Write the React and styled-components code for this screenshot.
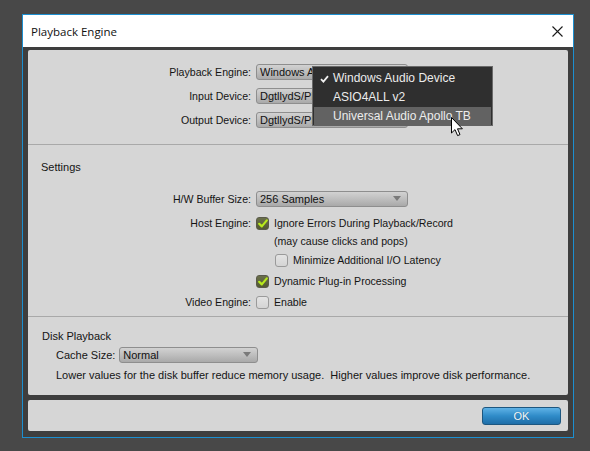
import React from "react";
import styled, { createGlobalStyle } from "styled-components";

const GlobalStyle = createGlobalStyle`
  html, body {
    margin: 0;
    padding: 0;
    background: #484848;
  }
  body {
    font-family: "Liberation Sans", Arial, sans-serif;
    font-size: 10.6px;
    color: #141414;
  }
`;

const engineRows = [
  { label: "Playback Engine:", value: "Windows A" },
  { label: "Input Device:", value: "DgtllydS/PD" },
  { label: "Output Device:", value: "DgtllydS/PD" },
];

const menuItems = [
  { text: "Windows Audio Device", checked: true },
  { text: "ASIO4ALL v2" },
  { text: "Universal Audio Apollo TB", active: true },
];

const Check = ({ checked }) => (
  <CheckBox checked={checked}>
    {checked && (
      <svg width="10" height="9" viewBox="0 0 10 9">
        <path
          d="M1.2 4.8 L3.8 7.4 L8.8 1.4"
          fill="none"
          stroke="#b8ea1c"
          strokeWidth="2.2"
          strokeLinecap="round"
          strokeLinejoin="round"
        />
      </svg>
    )}
  </CheckBox>
);

const App = () => {
  return (
    <>
      <GlobalStyle />
      <Window>
        <TitleBar>
          <Title>Playback Engine</Title>
          <CloseIcon width="11" height="11" viewBox="0 0 11 11">
            <path d="M0.5 0.5 L10.5 10.5 M10.5 0.5 L0.5 10.5" stroke="#1a1a1a" strokeWidth="1.1" />
          </CloseIcon>
        </TitleBar>
        <Body>
          <MainPanel>
            <Section h={94} pt={14}>
              <EngineGrid>
                {engineRows.map((row, i) => (
                  <React.Fragment key={i}>
                    <Label>{row.label}</Label>
                    <Select w={152}>{row.value}</Select>
                  </React.Fragment>
                ))}
              </EngineGrid>
              <Menu>
                {menuItems.map((item, i) => (
                  <MenuItem key={i} active={item.active}>
                    <MenuTick>
                      {item.checked && (
                        <svg width="9" height="8" viewBox="0 0 9 8">
                          <path
                            d="M1 4.2 L3.4 6.6 L8 1.2"
                            fill="none"
                            stroke="#f0f0f0"
                            strokeWidth="1.8"
                          />
                        </svg>
                      )}
                    </MenuTick>
                    {item.text}
                  </MenuItem>
                ))}
                <Cursor width="13" height="20" viewBox="0 0 13 20">
                  <path
                    d="M0.5 0.5 L0.5 16 L4 12.6 L6.6 18.6 L9 17.6 L6.5 11.8 L11.4 11.8 Z"
                    fill="#ffffff"
                    stroke="#000000"
                    strokeWidth="1"
                    strokeLinejoin="round"
                  />
                </Cursor>
              </Menu>
            </Section>
            <Divider />
            <Section h={171} pt={15} pl={13}>
              <Heading>Settings</Heading>
              <Row mt={17} ml={-13}>
                <Label>H/W Buffer Size:</Label>
                <Select w={152}>256 Samples</Select>
              </Row>
              <Row mt={8} ml={-13}>
                <Label>Host Engine:</Label>
                <Check checked />
                <Text>Ignore Errors During Playback/Record</Text>
              </Row>
              <Row mt={2} ml={-13}>
                <Label />
                <Text indent={18}>(may cause clicks and pops)</Text>
              </Row>
              <Row mt={3} ml={-13}>
                <Label />
                <Indent w={19} />
                <Check />
                <Text>Minimize Additional I/O Latency</Text>
              </Row>
              <Row mt={5} ml={-13}>
                <Label />
                <Check checked />
                <Text>Dynamic Plug-in Processing</Text>
              </Row>
              <Row mt={5} ml={-13}>
                <Label>Video Engine:</Label>
                <Check />
                <Text>Enable</Text>
              </Row>
            </Section>
            <Divider />
            <Section h={78} pt={12} pl={14}>
              <Heading>Disk Playback</Heading>
              <DiskRow>
                <span>Cache Size:</span>
                <Select w={139}>Normal</Select>
              </DiskRow>
              <Note>
                Lower values for the disk buffer reduce memory usage.&nbsp; Higher values improve disk
                performance.
              </Note>
            </Section>
          </MainPanel>
          <ButtonPanel>
            <OkButton>OK</OkButton>
          </ButtonPanel>
        </Body>
      </Window>
    </>
  );
};

const Window = styled.div`
  margin: 14px 0 0 22px;
  width: 550px;
  border: 1px solid #1c8fd0;
  display: flex;
  flex-direction: column;
`;
const TitleBar = styled.div`
  height: 32px;
  background: #ffffff;
  display: flex;
  align-items: center;
  justify-content: space-between;
  padding: 0 10px 0 8px;
`;
const Title = styled.div`
  font-family: "Open Sans", "Noto Sans", sans-serif;
  font-size: 11.5px;
  color: #111;
`;
const CloseIcon = styled.svg`
  display: block;
  margin-top: 1px;
`;
const Body = styled.div`
  background: #3e3e3e;
  padding: 3px 5px 6px 5px;
  display: flex;
  flex-direction: column;
  gap: 5px;
`;
const MainPanel = styled.div`
  background: #d6d6d6;
  border-radius: 2px;
  display: flex;
  flex-direction: column;
`;
const Section = styled.div`
  position: relative;
  height: ${(p) => p.h}px;
  padding-top: ${(p) => p.pt}px;
  padding-left: ${(p) => p.pl || 0}px;
  box-sizing: border-box;
`;
const Divider = styled.div`
  height: 1px;
  background: #a9a9a9;
`;
const EngineGrid = styled.div`
  display: grid;
  grid-template-columns: 228px auto;
  row-gap: 8px;
  grid-auto-rows: 16px;
  align-items: center;
  justify-items: start;
`;
const Label = styled.div`
  width: 223px;
  text-align: right;
  flex: none;
  margin-right: 5px;
  white-space: nowrap;
`;
const Select = styled.div`
  position: relative;
  box-sizing: border-box;
  width: ${(p) => p.w}px;
  height: 16px;
  line-height: 14px;
  padding-left: 3px;
  border: 1px solid #8e8e8e;
  border-radius: 3px;
  background: linear-gradient(#d2d2d2, #bcbcbc 55%, #a9a9a9);
  color: #111;
  font-size: 11px;
  white-space: nowrap;
  overflow: hidden;
  &::after {
    content: "";
    position: absolute;
    right: 6px;
    top: 4px;
    border-left: 4px solid transparent;
    border-right: 4px solid transparent;
    border-top: 5px solid #7a7a7a;
  }
`;
const Heading = styled.div`
  height: 14px;
  line-height: 14px;
  font-size: 11px;
`;
const Row = styled.div`
  display: flex;
  align-items: center;
  height: 16px;
  margin-top: ${(p) => p.mt}px;
  margin-left: ${(p) => p.ml || 0}px;
`;
const Indent = styled.div`
  width: ${(p) => p.w}px;
  flex: none;
`;
const Text = styled.span`
  margin-left: ${(p) => (p.indent ? p.indent : 5)}px;
  white-space: nowrap;
`;
const CheckBox = styled.div`
  box-sizing: border-box;
  width: 13px;
  height: 13px;
  flex: none;
  border-radius: 3px;
  display: flex;
  align-items: center;
  justify-content: center;
  border: 1px solid ${(p) => (p.checked ? "#5a5a4a" : "#9a9a9a")};
  background: ${(p) =>
    p.checked ? "linear-gradient(#6a6f4a, #545a33)" : "linear-gradient(#e4e4e4, #d4d4d4)"};
`;
const DiskRow = styled.div`
  display: flex;
  align-items: center;
  gap: 4px;
  height: 16px;
  margin: 4px 0 0 14px;
  font-size: 11px;
`;
const Note = styled.div`
  margin: 5px 0 0 14px;
  height: 14px;
  line-height: 14px;
  font-size: 11px;
  white-space: nowrap;
`;
const Menu = styled.div`
  position: absolute;
  left: 284px;
  top: 16px;
  width: 181px;
  height: 60px;
  box-sizing: border-box;
  background: #2f2f2f;
  border: 1px solid #6a6a6a;
  padding-top: 2px;
  font-size: 12px;
  color: #ececec;
`;
const MenuItem = styled.div`
  height: 19px;
  line-height: 19px;
  display: flex;
  align-items: center;
  margin: 0 1px;
  white-space: nowrap;
  background: ${(p) => (p.active ? "#626262" : "transparent")};
`;
const MenuTick = styled.span`
  width: 19px;
  flex: none;
  display: flex;
  justify-content: center;
  padding-left: 1px;
  box-sizing: border-box;
`;
const Cursor = styled.svg`
  position: absolute;
  left: 138px;
  top: 50px;
`;
const ButtonPanel = styled.div`
  height: 31px;
  background: #d6d6d6;
  border-radius: 2px;
  display: flex;
  align-items: center;
  justify-content: flex-end;
  padding-right: 7px;
`;
const OkButton = styled.div`
  box-sizing: border-box;
  width: 79px;
  height: 18px;
  border: 1px solid #1d5780;
  border-radius: 3px;
  background: linear-gradient(#5fb2e6, #2f8bc8 50%, #1f6ea8);
  color: #f4f8fb;
  font-size: 11px;
  line-height: 16px;
  text-align: center;
  text-shadow: 0 0 1px rgba(0, 0, 0, 0.3);
`;

export default App;
